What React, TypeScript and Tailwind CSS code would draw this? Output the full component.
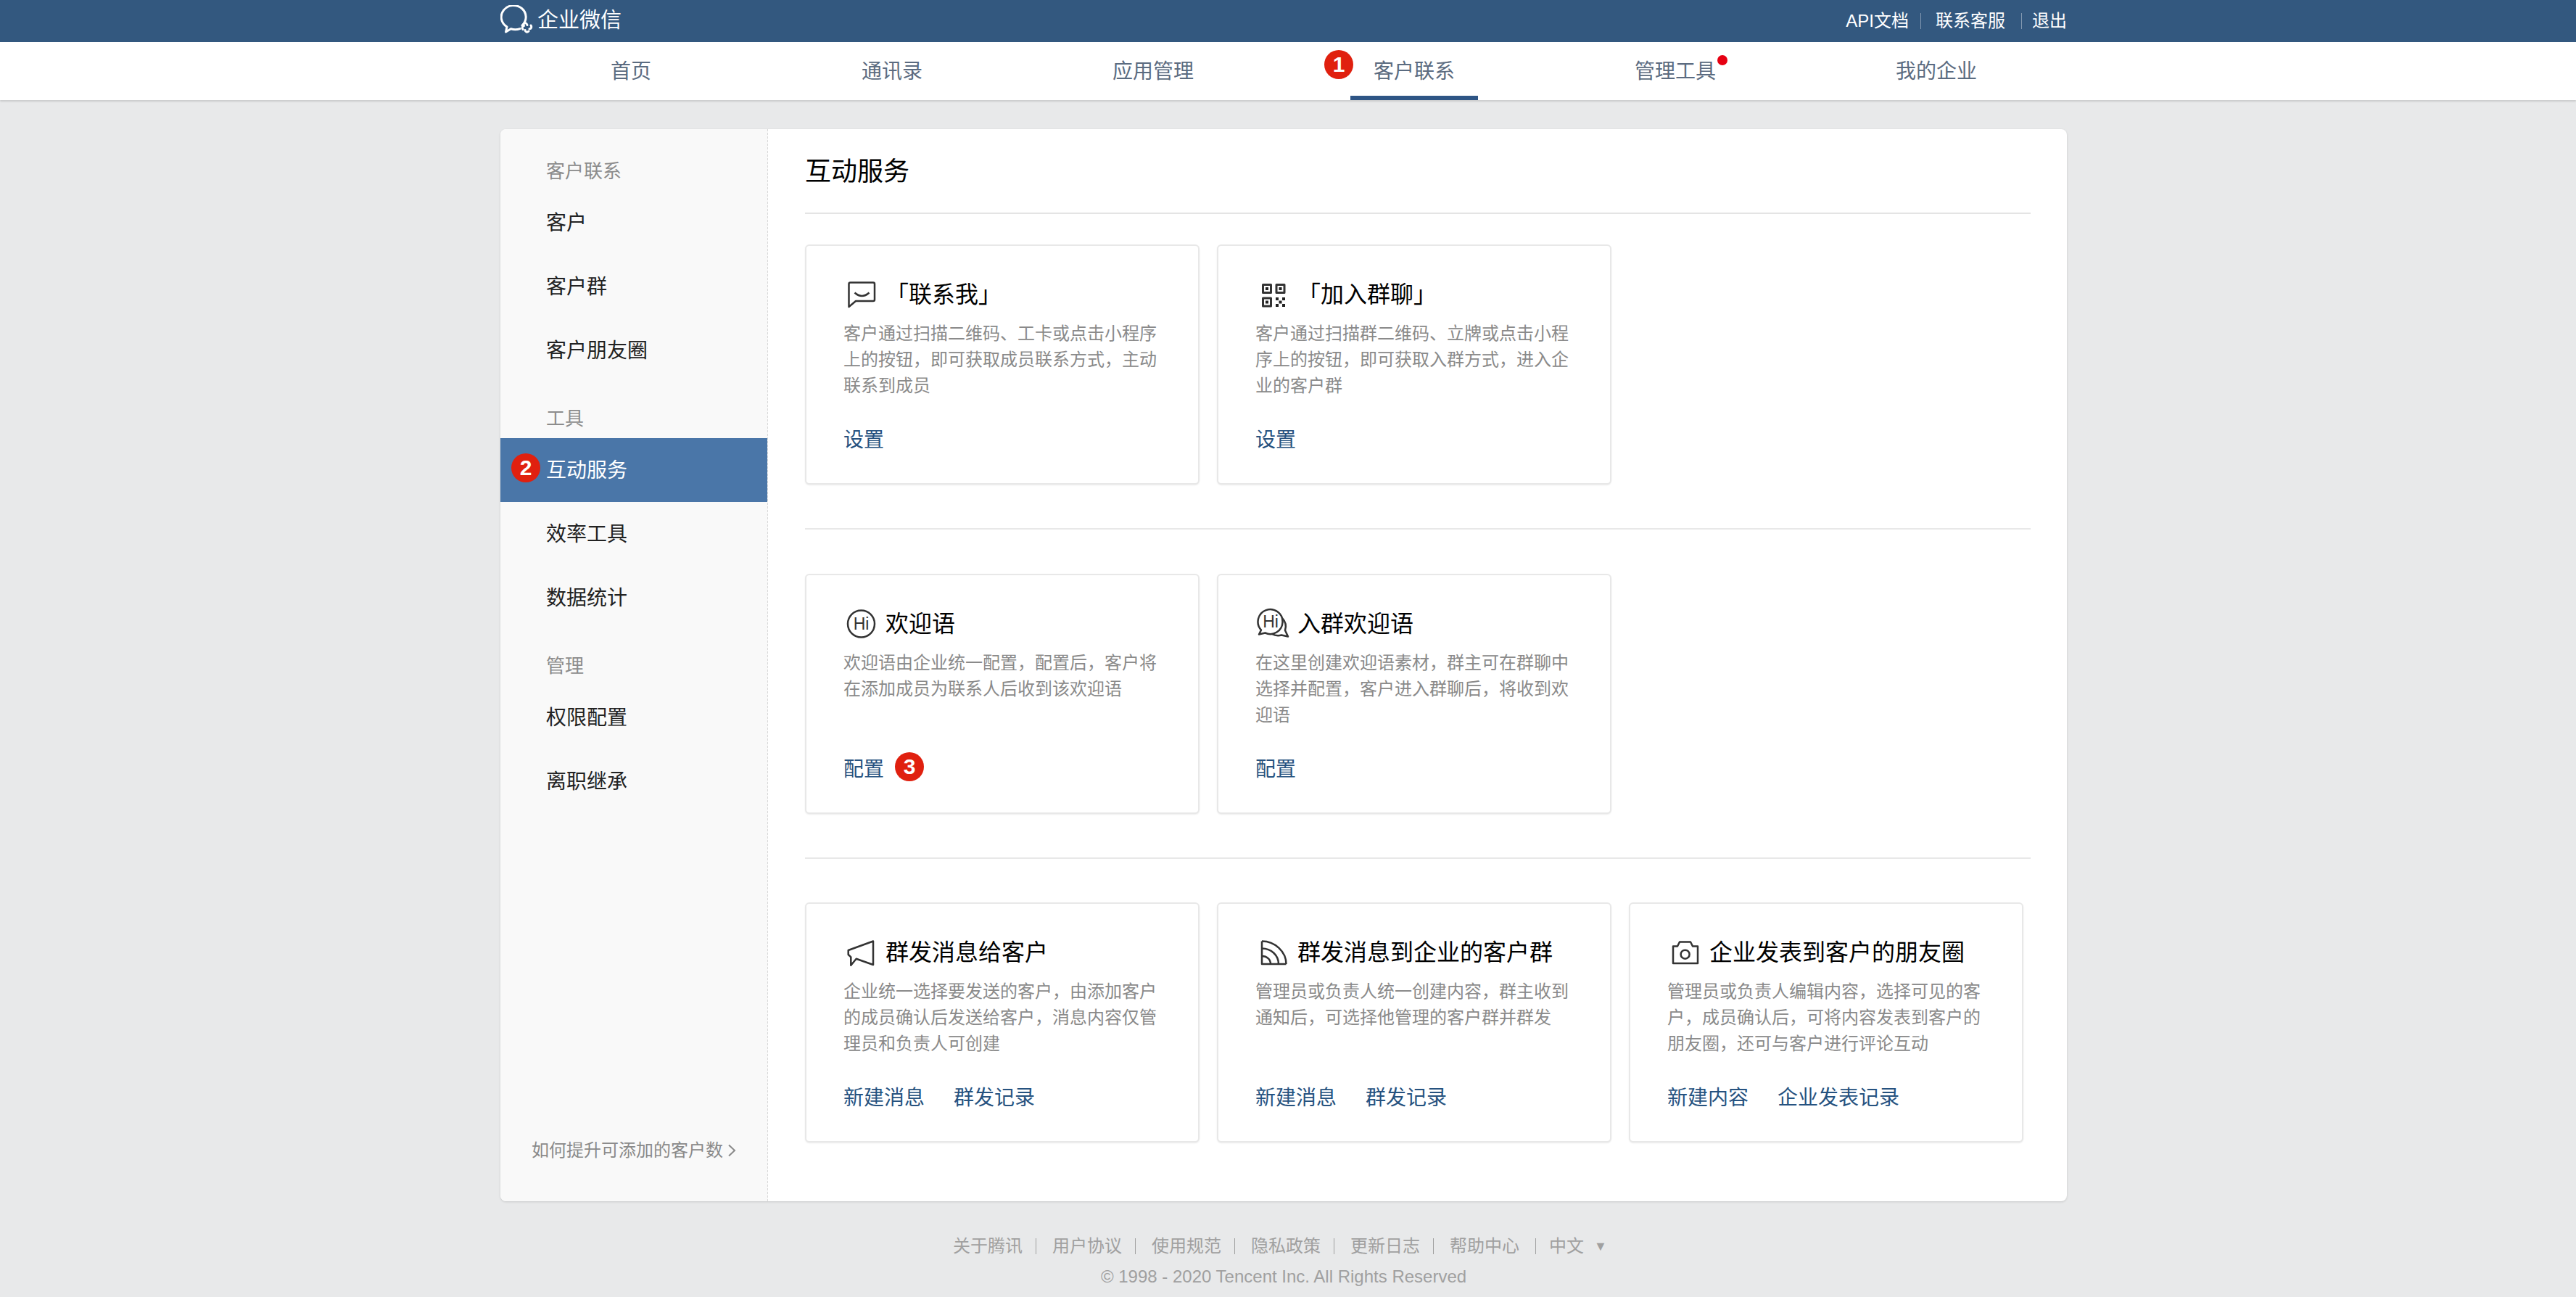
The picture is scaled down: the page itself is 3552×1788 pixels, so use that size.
import type { ReactNode } from "react";

const tabs = ["首页", "通讯录", "应用管理", "客户联系", "管理工具", "我的企业"];
const footerLinks = ["关于腾讯", "用户协议", "使用规范", "隐私政策", "更新日志"];

function Badge({ n, className }: { n: number; className: string }) {
  return (
    <span className={`absolute flex h-[40px] w-[40px] items-center justify-center rounded-full bg-[#e0200f] text-[30px] font-bold leading-none text-white ${className}`}>
      {n}
    </span>
  );
}

function IconBox({ children }: { children: ReactNode }) {
  return (
    <svg width="58" height="44" viewBox="0 0 58 44" fill="none" stroke="#333" strokeWidth="2.5" strokeLinejoin="round" className="shrink-0">
      {children}
    </svg>
  );
}

const ChatIcon = () => (
  <IconBox>
    <path d="M9.5 5.5h31.5a2 2 0 0 1 2 2v21.5a2 2 0 0 1-2 2H17l-9.5 8V7.5a2 2 0 0 1 2-2z" />
    <path d="M15.5 19.5Q25.5 28.5 35.5 19.5" />
  </IconBox>
);

const QrIcon = () => (
  <IconBox>
    <rect x="10.5" y="8.5" width="11" height="11" strokeWidth="3" />
    <rect x="29" y="8.5" width="11" height="11" strokeWidth="3" />
    <rect x="10.5" y="27" width="11" height="11" strokeWidth="3" />
    <g fill="#222" stroke="none">
      <rect x="14" y="12" width="4" height="4" />
      <rect x="32.5" y="12" width="4" height="4" />
      <rect x="14" y="30.5" width="4" height="4" />
      <rect x="28" y="26" width="4" height="4" />
      <rect x="37" y="26" width="4" height="4" />
      <rect x="32.5" y="30.5" width="4" height="4" />
      <rect x="28" y="35" width="4" height="4" />
      <rect x="37" y="35" width="4" height="4" />
    </g>
  </IconBox>
);

const HiText = ({ x, y }: { x: number; y: number }) => (
  <text x={x} y={y} textAnchor="middle" fontSize="23" fontFamily="Liberation Sans" fill="#333" stroke="none">
    Hi
  </text>
);

const HiIcon = () => (
  <IconBox>
    <circle cx="24.5" cy="22" r="18.5" />
    <HiText x={24.5} y={30} />
  </IconBox>
);

const HiGroupIcon = () => (
  <IconBox>
    <path d="M8 30.5A17 17 0 1 1 13.5 34.5L5 36.5z" />
    <path d="M37 14A17 17 0 0 1 41 31L45 39.5L36 37.5A17 17 0 0 1 23 36" />
    <HiText x={21} y={27} />
  </IconBox>
);

const MegaphoneIcon = () => (
  <IconBox>
    <path d="M41 6.5V39L17.7 30.7L10.3 39.7V28.3L6.7 25V19z" />
  </IconBox>
);

const RssIcon = () => (
  <IconBox>
    <path d="M9 6.5V38H42.5" />
    <path d="M9 6.5C27 6.5 42.5 21 42.5 38" />
    <path d="M9 16.5C22 16.5 32 26 32 38" />
    <path d="M9 27C16 27 21 31.5 21 38" />
  </IconBox>
);

const CameraIcon = () => (
  <IconBox>
    <path d="M8 13.5H14L17 7.5H32L35 13.5H42V37H8z" />
    <circle cx="24.6" cy="24.7" r="6" />
  </IconBox>
);

function Logo() {
  return (
    <svg width="47" height="40" viewBox="0 0 47 40" fill="none" stroke="#fff" strokeWidth="3" className="mb-[4px] shrink-0">
      <path d="M30 28A17 16 0 1 0 9 30L7.5 37L14.5 32.8C18.5 34 23 34 27 32.6" strokeLinejoin="round" strokeLinecap="round" />
      <path d="M32 26C34 24 36 24.5 37 27.5M42 28C43.5 30 43 32.5 40 33M39 36C37 38 34.5 37.5 34 34.5M31 33.5C29.5 31.5 30 29 32.5 28.5" strokeLinecap="round" />
    </svg>
  );
}

function NavTab({ label }: { label: string }) {
  const active = label === "客户联系";
  return (
    <div className="flex h-full justify-center">
      <span className={`relative flex h-full items-center border-b-[6px] px-[32px] pt-[7px] ${active ? "border-[#2e5585]" : "border-transparent"}`}>
        {label}
        {active && <Badge n={1} className="left-[-36px] top-[11px]" />}
        {label === "管理工具" && <span className="absolute left-[146px] top-[18px] h-[14px] w-[14px] rounded-full bg-[#e60012]" />}
      </span>
    </div>
  );
}

function SideLabel({ text, first }: { text: string; first?: boolean }) {
  return <div className={`flex h-[54px] items-center pl-[63px] text-[26px] text-[#8c8c8c] ${first ? "" : "mt-[23px]"}`}>{text}</div>;
}

function SideItem({ text, active }: { text: string; active?: boolean }) {
  return (
    <div className={`relative flex h-[88px] items-center pl-[63px] pt-[2px] text-[28px] ${active ? "bg-[#4a76a8] text-white" : "text-[#222]"}`}>
      {active && <Badge n={2} className="left-[15px] top-[21px]" />}
      {text}
    </div>
  );
}

function ServiceCard({ icon, title, desc, actions, badge }: { icon: ReactNode; title: string; desc: string; actions: string[]; badge?: boolean }) {
  return (
    <div className="flex h-[331px] w-[544px] flex-col rounded-[6px] border-2 border-[#e8e8e8] bg-white pb-[39px] pl-[51px] pr-[52px] pt-[45px] shadow-[0_1px_2px_rgba(0,0,0,0.08)]">
      <div className="flex h-[44px] items-center text-[32px] text-black">
        {icon}
        <span className="whitespace-nowrap">{title}</span>
      </div>
      <p className="mt-[14px] text-[24px] leading-[36px] text-[#8a8a8a]">{desc}</p>
      <div className="relative mt-auto flex h-[44px] items-center gap-[40px] pt-[3px] text-[28px] text-[#26527f]">
        {actions.map((a) => (
          <span key={a}>{a}</span>
        ))}
        {badge && <Badge n={3} className="left-[71px] top-[0px]" />}
      </div>
    </div>
  );
}

export default function App() {
  return (
    <div className="min-h-[1788px] bg-[#e8e9ea] font-['Liberation_Sans','Noto_Sans_CJK_SC',sans-serif]">
      <header className="h-[58px] bg-[#33587f]">
        <div className="ml-[690px] flex h-full w-[2160px] items-center justify-between text-white">
          <div className="flex items-center gap-[4px] text-[29px]">
            <Logo />
            <span>企业微信</span>
          </div>
          <div className="flex items-center text-[24px]">
            <span>API文档</span>
            <span className="ml-[16px] mr-[20px] h-[22px] w-px bg-white/40" />
            <span>联系客服</span>
            <span className="ml-[22px] mr-[14px] h-[22px] w-px bg-white/40" />
            <span>退出</span>
          </div>
        </div>
      </header>

      <nav className="h-[80px] bg-white shadow-[0_2px_2px_rgba(0,0,0,0.12)]">
        <div className="ml-[690px] grid h-full w-[2160px] grid-cols-6 text-[28px] text-[#5b6b80]">
          {tabs.map((t) => (
            <NavTab key={t} label={t} />
          ))}
        </div>
      </nav>

      <main className="ml-[690px] mt-[40px] flex h-[1478px] w-[2160px] overflow-hidden rounded-[8px] bg-white shadow-[0_1px_3px_rgba(0,0,0,0.15)]">
        <aside className="flex w-[369px] shrink-0 flex-col border-r border-dashed border-[#d8d8d8] bg-[#f9f9f9] pt-[31px]">
          <SideLabel text="客户联系" first />
          <SideItem text="客户" />
          <SideItem text="客户群" />
          <SideItem text="客户朋友圈" />
          <SideLabel text="工具" />
          <SideItem text="互动服务" active />
          <SideItem text="效率工具" />
          <SideItem text="数据统计" />
          <SideLabel text="管理" />
          <SideItem text="权限配置" />
          <SideItem text="离职继承" />
          <div className="mt-auto flex items-center gap-[6px] pb-[52px] pl-[43px] text-[24px] leading-[36px] text-[#8a8a8a]">
            如何提升可添加的客户数
            <svg width="12" height="18" viewBox="0 0 12 18" fill="none" stroke="#8a8a8a" strokeWidth="2">
              <path d="M2 1.5L10 9L2 16.5" />
            </svg>
          </div>
        </aside>

        <section className="flex-1 pl-[51px] pr-[50px]">
          <h1 className="flex h-[117px] items-center border-b-2 border-[#e4e4e4] pt-[3px] text-[36px] font-normal text-black">互动服务</h1>

          <div className="flex gap-[24px] border-b-2 border-[#e8e8e8] pb-[60px] pt-[42px]">
            <ServiceCard
              icon={<ChatIcon />}
              title="「联系我」"
              desc="客户通过扫描二维码、工卡或点击小程序上的按钮，即可获取成员联系方式，主动联系到成员"
              actions={["设置"]}
            />
            <ServiceCard
              icon={<QrIcon />}
              title="「加入群聊」"
              desc="客户通过扫描群二维码、立牌或点击小程序上的按钮，即可获取入群方式，进入企业的客户群"
              actions={["设置"]}
            />
          </div>

          <div className="flex gap-[24px] border-b-2 border-[#e8e8e8] pb-[60px] pt-[61px]">
            <ServiceCard
              icon={<HiIcon />}
              title="欢迎语"
              desc="欢迎语由企业统一配置，配置后，客户将在添加成员为联系人后收到该欢迎语"
              actions={["配置"]}
              badge
            />
            <ServiceCard
              icon={<HiGroupIcon />}
              title="入群欢迎语"
              desc="在这里创建欢迎语素材，群主可在群聊中选择并配置，客户进入群聊后，将收到欢迎语"
              actions={["配置"]}
            />
          </div>

          <div className="flex gap-[24px] pt-[60px]">
            <ServiceCard
              icon={<MegaphoneIcon />}
              title="群发消息给客户"
              desc="企业统一选择要发送的客户，由添加客户的成员确认后发送给客户，消息内容仅管理员和负责人可创建"
              actions={["新建消息", "群发记录"]}
            />
            <ServiceCard
              icon={<RssIcon />}
              title="群发消息到企业的客户群"
              desc="管理员或负责人统一创建内容，群主收到通知后，可选择他管理的客户群并群发"
              actions={["新建消息", "群发记录"]}
            />
            <ServiceCard
              icon={<CameraIcon />}
              title="企业发表到客户的朋友圈"
              desc="管理员或负责人编辑内容，选择可见的客户，成员确认后，可将内容发表到客户的朋友圈，还可与客户进行评论互动"
              actions={["新建内容", "企业发表记录"]}
            />
          </div>
        </section>
      </main>

      <footer className="ml-[690px] w-[2160px] pt-[44px] text-[24px] leading-[36px] text-[#a0a0a0]">
        <div className="flex items-center pl-[624px]">
          {footerLinks.map((l) => (
            <span key={l} className="flex items-center">
              {l}
              <span className="ml-[18px] mr-[22px] h-[22px] w-px bg-[#a0a0a0]" />
            </span>
          ))}
          <span>帮助中心</span>
          <span className="ml-[22px] mr-[18px] h-[22px] w-px bg-[#a0a0a0]" />
          <span>中文</span>
          <span className="ml-[14px] text-[18px]">▼</span>
        </div>
        <div className="mt-[6px] text-center">© 1998 - 2020 Tencent Inc. All Rights Reserved</div>
      </footer>
    </div>
  );
}
